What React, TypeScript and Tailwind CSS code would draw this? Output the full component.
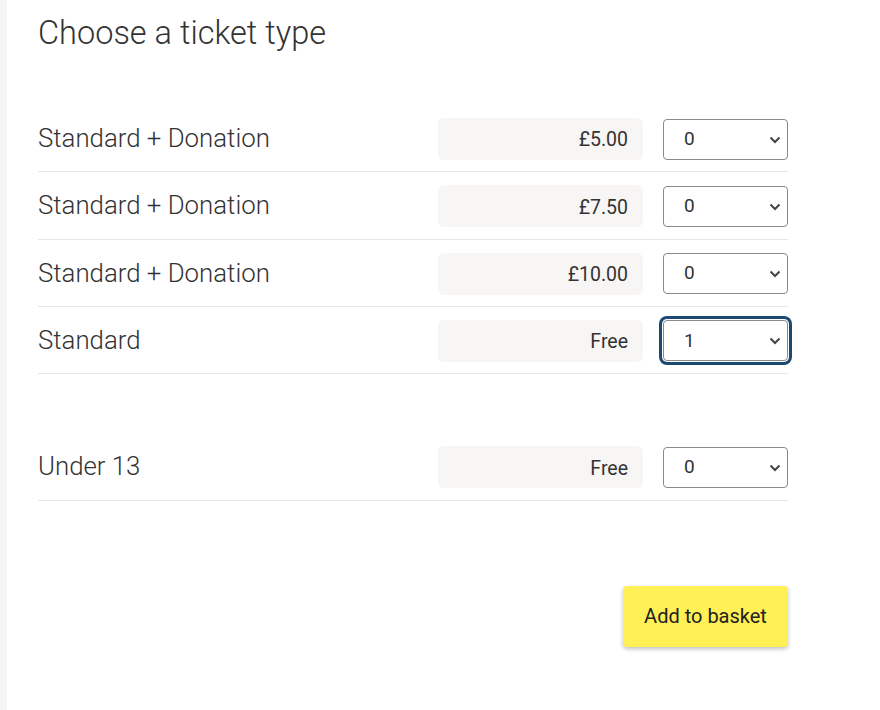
import * as React from 'react';

type Ticket = { name: string; price: string; qty: string; focused?: boolean; spaced?: boolean };

const tickets: Ticket[] = [
  { name: 'Standard + Donation', price: '£5.00', qty: '0' },
  { name: 'Standard + Donation', price: '£7.50', qty: '0' },
  { name: 'Standard + Donation', price: '£10.00', qty: '0' },
  { name: 'Standard', price: 'Free', qty: '1', focused: true },
  { name: 'Under 13', price: 'Free', qty: '0', spaced: true },
];

function QtySelect({ value, focused }: { value: string; focused?: boolean }) {
  return (
    <div className="relative w-[125px] h-[41px]">
      <select
        defaultValue={value}
        className={
          'appearance-none w-full h-full rounded-[4px] border border-[#8a8a8a] bg-white pl-[20px] text-[19px] text-[#333] ' +
          (focused ? 'ring-[3px] ring-[#1d4a72] ring-offset-1' : '')
        }
      >
        {['0', '1', '2', '3', '4', '5'].map((n) => (
          <option key={n} value={n}>
            {n}
          </option>
        ))}
      </select>
      <svg
        className="pointer-events-none absolute right-[7px] top-[17px]"
        width="12"
        height="8"
        viewBox="0 0 12 8"
        fill="none"
      >
        <path d="M1.5 1.5 L6 6 L10.5 1.5" stroke="#444" strokeWidth="2" />
      </svg>
    </div>
  );
}

function TicketRow({ ticket }: { ticket: Ticket }) {
  return (
    <div
      className={
        'flex items-center border-b border-[#e6e6e6] pb-[11.33px] pt-[13px] ' + (ticket.spaced ? 'mt-[59px]' : '')
      }
    >
      <div className="flex-1 text-[25.8px] font-light text-[#333] leading-[36px] pb-[2px]">{ticket.name}</div>
      <div className="w-[205px] h-[42px] rounded-[6px] bg-[#f7f6f4] flex items-center justify-end pr-[15px] pt-[2px] text-[19.5px] text-[#333]">
        {ticket.price}
      </div>
      <div className="ml-[20px]">
        <QtySelect value={ticket.qty} focused={ticket.focused} />
      </div>
    </div>
  );
}

export default function App() {
  return (
    <div className="flex min-h-[710px] bg-white" style={{ fontFamily: 'Roboto, "Liberation Sans", sans-serif' }}>
      <div className="w-[7px] bg-[#f6f5f3]" />
      <div className="w-[750px] ml-[31px]">
        <h1 className="pt-[13px] text-[32.5px] font-light leading-[40px] text-[#333]">Choose a ticket type</h1>
        <div className="mt-[52px]">
          {tickets.map((t, i) => (
            <TicketRow key={i} ticket={t} />
          ))}
        </div>
        <div className="flex justify-end mt-[85px]">
          <button className="w-[165px] h-[61px] rounded-[4px] bg-[#fff055] text-[20px] text-[#222] shadow-[0_2px_4px_rgba(0,0,0,0.25)]">
            Add to basket
          </button>
        </div>
      </div>
    </div>
  );
}
